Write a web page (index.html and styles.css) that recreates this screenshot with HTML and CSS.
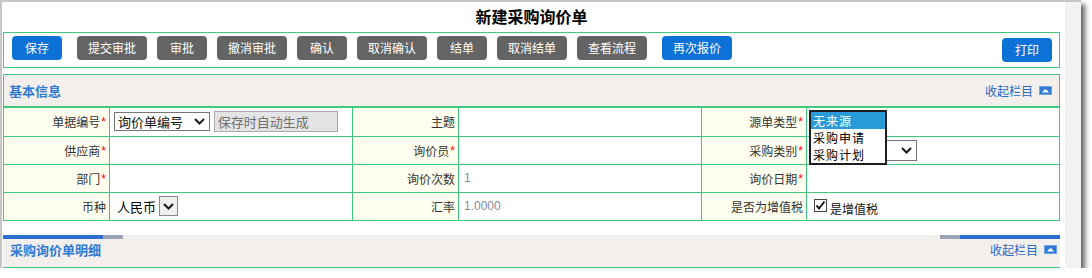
FILE: index.html
```html
<!DOCTYPE html>
<html lang="zh-CN">
<head>
<meta charset="utf-8">
<title>新建采购询价单</title>
<link rel="stylesheet" href="styles.css">
</head>
<body>
<div class="frame">
  <div class="page">
    <h1 class="title">新建采购询价单</h1>
    <div class="toolbar">
      <button class="btn btn-blue btn-first">保存</button>
      <button class="btn">提交审批</button>
      <button class="btn">审批</button>
      <button class="btn">撤消审批</button>
      <button class="btn">确认</button>
      <button class="btn">取消确认</button>
      <button class="btn">结单</button>
      <button class="btn">取消结单</button>
      <button class="btn">查看流程</button>
      <button class="btn btn-blue btn-resub">再次报价</button>
      <button class="btn btn-blue btn-print">打印</button>
    </div>

    <div class="section">
      <div class="sec-head">
        <span class="sec-title">基本信息</span>
        <a class="collapse">收起栏目<svg class="cicon" width="13" height="9" viewBox="0 0 13 9"><rect x="0.5" y="0.5" width="12" height="8" fill="#2e7bd6" stroke="#6fa3e2"/><polygon points="3,6.5 5.5,3.5 7.5,3.5 10,6.5" fill="#fff"/></svg></a>
      </div>
      <table class="form">
        <colgroup>
          <col class="c-label"><col class="c-val"><col class="c-label"><col class="c-val"><col class="c-label3"><col>
        </colgroup>
        <tr>
          <td class="lbl">单据编号<i class="req">*</i></td>
          <td class="val">
            <span class="sel sel-no">询价单编号<svg class="chev" width="11" height="7" viewBox="0 0 11 7"><polyline points="1,1 5.5,5.5 10,1" fill="none" stroke="#1a1a1a" stroke-width="2"/></svg></span>
            <span class="inp-dis">保存时自动生成</span>
          </td>
          <td class="lbl">主题</td>
          <td class="val"></td>
          <td class="lbl">源单类型<i class="req">*</i></td>
          <td class="val rel">
            <div class="listbox">
              <div class="opt opt-on">无来源</div>
              <div class="opt">采购申请</div>
              <div class="opt">采购计划</div>
            </div>
          </td>
        </tr>
        <tr>
          <td class="lbl">供应商<i class="req">*</i></td>
          <td class="val"></td>
          <td class="lbl">询价员<i class="req">*</i></td>
          <td class="val"></td>
          <td class="lbl">采购类别<i class="req">*</i></td>
          <td class="val"><span class="sel sel-cat"><svg class="chev" width="11" height="7" viewBox="0 0 11 7"><polyline points="1,1 5.5,5.5 10,1" fill="none" stroke="#1a1a1a" stroke-width="2"/></svg></span></td>
        </tr>
        <tr>
          <td class="lbl">部门<i class="req">*</i></td>
          <td class="val"></td>
          <td class="lbl">询价次数</td>
          <td class="val num">1</td>
          <td class="lbl">询价日期<i class="req">*</i></td>
          <td class="val"></td>
        </tr>
        <tr>
          <td class="lbl">币种</td>
          <td class="val"><span class="cur">人民币<span class="cur-btn"><svg width="11" height="7" viewBox="0 0 11 7"><polyline points="1,1 5.5,5.5 10,1" fill="none" stroke="#1a1a1a" stroke-width="2"/></svg></span></span></td>
          <td class="lbl">汇率</td>
          <td class="val num">1.0000</td>
          <td class="lbl">是否为增值税</td>
          <td class="val"><span class="chk"><svg width="13" height="13" viewBox="0 0 13 13"><rect x="0.5" y="0.5" width="12" height="12" fill="#fff" stroke="#444"/><polyline points="2.5,6.5 5,9.5 10.5,2.5" fill="none" stroke="#1a1a1a" stroke-width="2"/></svg><span class="chk-txt">是增值税</span></span></td>
        </tr>
      </table>
    </div>

    <div class="detail">
      <div class="bars"><span class="bar-l"></span><span class="bar-r"></span></div>
      <div class="detail-row">
        <span class="sec-title">采购询价单明细</span>
        <a class="collapse">收起栏目<svg class="cicon" width="13" height="9" viewBox="0 0 13 9"><rect x="0.5" y="0.5" width="12" height="8" fill="#2e7bd6" stroke="#6fa3e2"/><polygon points="3,6.5 5.5,3.5 7.5,3.5 10,6.5" fill="#fff"/></svg></a>
      </div>
    </div>
  </div>
  <div class="track"></div>
</div>
</body>
</html>
```
FILE: styles.css
```css
html, body {
  margin: 0;
  padding: 0;
  background: #fff;
}
body {
  font-family: "Noto Sans CJK SC", "Liberation Sans", sans-serif;
  color: #333;
}
.frame {
  width: 1079px;
  height: 266px;
  border-top: 2px solid #c6c6c6;
  border-left: 2px solid #c6c6c6;
  display: flex;
  box-shadow: 4px 4px 5px rgba(0, 0, 0, 0.6);
}
.page {
  flex: 0 0 1063px;
  box-sizing: border-box;
  padding: 0 5px 0 1px;
  background: #fff;
}
.track {
  flex: 1;
  background: #f2f2f2;
}
.title {
  margin: 0;
  height: 30px;
  line-height: 28px;
  text-align: center;
  font-size: 16px;
  font-weight: bold;
  color: #000;
}
.toolbar {
  display: flex;
  align-items: flex-start;
  gap: 10px;
  border: 1px solid #41c87f;
  height: 36px;
  box-sizing: border-box;
  padding: 3px 7px 0 8px;
}
.btn {
  height: 24px;
  min-width: 50px;
  padding: 0 11px;
  box-sizing: border-box;
  border: 0;
  border-radius: 4px;
  background: #646464;
  color: #fff;
  font-family: "Noto Sans CJK SC", sans-serif;
  font-size: 12px;
  line-height: 24px;
}
.btn-blue { background: #0d72d8; }
.btn-first { margin-right: 5px; }
.btn-resub { margin-left: 5px; }
.btn-print { margin-left: auto; margin-top: 2px; }

.section {
  margin-top: 6px;
}
.sec-head {
  height: 34px;
  box-sizing: border-box;
  border: 1px solid #41c87f;
  border-bottom: 2px solid #41c87f;
  background: #f2efec;
  display: flex;
  align-items: center;
  justify-content: space-between;
  padding: 0 7px 0 5px;
}
.sec-title {
  font-size: 13px;
  font-weight: bold;
  color: #2f7ad3;
}
.collapse {
  font-size: 12px;
  color: #2a67c4;
  display: inline-flex;
  align-items: center;
  gap: 6px;
}
.cicon { display: block; }

.form {
  width: 100%;
  border-collapse: collapse;
  table-layout: fixed;
}
.c-label { width: 106px; }
.c-val { width: 243px; }
.c-label3 { width: 105px; }
.form td {
  border: 1px solid #41c87f;
  height: 28px;
  padding: 0;
  font-size: 12px;
  box-sizing: border-box;
}
.form tr:first-child td { border-top: 0; }
.lbl {
  background: #fffff0;
  text-align: right;
  padding-right: 3px !important;
  color: #333;
}
.val {
  background: #fff;
  padding-left: 4px !important;
}
.rel { position: relative; }
.req {
  font-style: normal;
  color: #f00;
  font-family: "Liberation Sans", sans-serif;
  font-size: 12px;
  margin-left: 1px;
  vertical-align: 1px;
}
.num {
  font-family: "Liberation Sans", sans-serif;
  font-size: 13px;
  color: #7f8b9c;
  padding-left: 5px !important;
}
.sel {
  display: inline-flex;
  align-items: center;
  justify-content: space-between;
  box-sizing: border-box;
  height: 19px;
  border: 1px solid #767676;
  background: #fff;
  font-size: 13px;
  color: #111;
  padding: 0 4px 0 3px;
  vertical-align: middle;
}
.sel-no { width: 96px; }
.sel-cat { width: 108px; height: 21px; justify-content: flex-end; padding-right: 4px; margin-left: -2px; }
.chev { display: block; }
.inp-dis {
  display: inline-block;
  box-sizing: border-box;
  width: 124px;
  height: 21px;
  line-height: 19px;
  border: 1px solid #a9a9a9;
  background: #e4e4e4;
  color: #6f6f6f;
  font-size: 13px;
  padding-left: 3px;
  margin-left: 1px;
  vertical-align: middle;
}
.listbox {
  position: absolute;
  left: 2px;
  top: 2px;
  width: 78px;
  box-sizing: border-box;
  border: 2px solid #1e1e1e;
  background: #fff;
  z-index: 2;
}
.opt {
  height: 17px;
  line-height: 17px;
  font-size: 12px;
  color: #000;
  padding-left: 2px;
  letter-spacing: 1px;
  overflow: hidden;
}
.opt-on {
  background: #2a9bd9;
  color: #fff;
}
.cur {
  display: inline-flex;
  align-items: center;
  font-size: 13px;
  color: #000;
  gap: 3px;
  margin-left: 3px;
}
.cur-btn {
  display: inline-flex;
  align-items: center;
  justify-content: center;
  width: 19px;
  height: 20px;
  box-sizing: border-box;
  border: 1px solid #8a8a8a;
  background: #efefef;
}
.chk {
  display: inline-flex;
  align-items: center;
  gap: 3px;
  margin-left: 3px;
}
.chk svg { display: block; margin-top: -2px; }
.chk-txt {
  font-size: 12px;
  color: #111;
  margin-top: 5px;
}

.detail {
  margin-top: 14px;
  height: 33px;
  box-sizing: border-box;
  background: #f2efec;
  border-bottom: 1px solid #41c87f;
}
.bars {
  display: flex;
  justify-content: space-between;
  height: 4px;
}
.bar-l {
  width: 120px;
  background: linear-gradient(to right, #2c6fd0 0, #2c6fd0 100px, #98a3b7 100px);
}
.bar-r {
  width: 120px;
  background: linear-gradient(to right, #98a3b7 0, #98a3b7 20px, #2c6fd0 20px);
}
.detail-row {
  display: flex;
  justify-content: space-between;
  align-items: center;
  height: 22px;
  padding: 0 3px 0 7px;
}
```
